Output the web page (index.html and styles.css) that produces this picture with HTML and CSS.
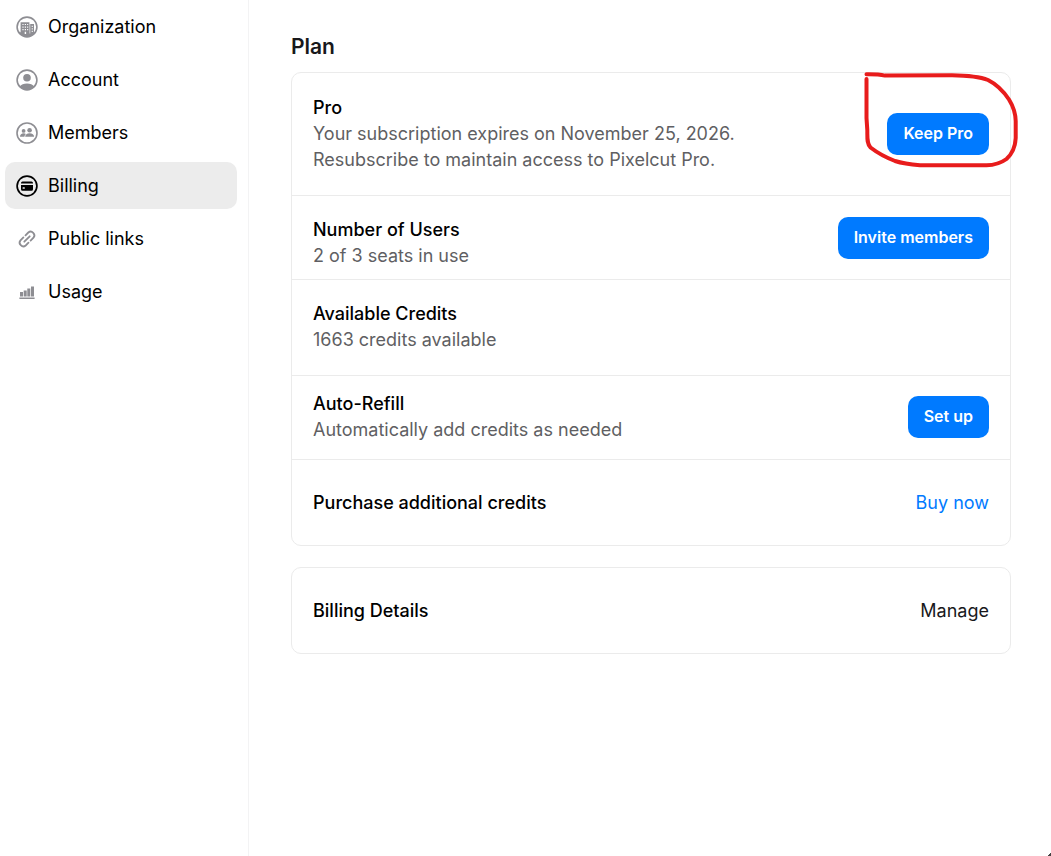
FILE: index.html
```html
<!DOCTYPE html>
<html lang="en">
<head>
    <meta charset="UTF-8">
    <meta name="viewport" content="width=device-width, initial-scale=1">
    <title>Billing</title>
    <link rel="stylesheet" href="styles.css">
</head>
<body>
<div class="page">
    <nav class="sidebar">
        <a class="nav-item" href="#organization">
            <svg class="icon" viewBox="0 0 22 22">
                <circle cx="11" cy="11" r="9.9" fill="none" stroke="currentColor" stroke-width="1.6"/>
                <path fill="currentColor" d="M4.6 6.2h8.8v1.7h4.6v8.3h1.3a9.9 9.9 0 0 1-16.6 0h1.9z"/>
                <path fill="#fff" d="M6.4 7.900h1.200v1.200H6.400zM8.800 7.900H10v1.200H8.800zM11.100 7.900h1.100v1.200h-1.100zM6.400 10.500h1.200v1.200H6.400zM8.800 10.500H10v1.200H8.800zM11.100 10.500h1.100v1.200h-1.100zM6.400 13.100h1.200v1.200H6.400zM8.800 13.100H10v1.200H8.800zM11.100 13.100h1.100v1.200h-1.100zM8.700 15.700h1.400v2.200H8.700zM13.600 8h.6v9.400h-.6zM15.700 9.800h1.100v1.100h-1.100zM15.700 12.300h1.100v1.100h-1.100zM15.700 14.800h1.100v1.100h-1.100z"/>
            </svg>
            <span>Organization</span>
        </a>
        <a class="nav-item" href="#account">
            <svg class="icon" viewBox="0 0 22 22">
                <circle cx="11" cy="11" r="9.9" fill="none" stroke="currentColor" stroke-width="1.6"/>
                <circle cx="11" cy="8.7" r="3.8" fill="currentColor"/>
                <path fill="currentColor" d="M3.6 17.6c1.6-2 4.2-3.2 7.4-3.2s5.8 1.2 7.4 3.2a10 10 0 0 1-14.8 0z"/>
            </svg>
            <span>Account</span>
        </a>
        <a class="nav-item" href="#members">
            <svg class="icon" viewBox="0 0 22 22">
                <circle cx="11" cy="11" r="10" fill="none" stroke="currentColor" stroke-width="1.6"/>
                <circle cx="7.6" cy="8.9" r="1.9" fill="currentColor"/>
                <circle cx="13.6" cy="8.3" r="2.3" fill="currentColor"/>
                <path fill="currentColor" d="M4 14.8c0-2.200 1.500-3.500 3.600-3.500 1 0 1.800.3 2.300.8-.9.7-1.400 1.600-1.500 2.700zM9.200 14.8c0-2.300 1.800-3.600 4.400-3.600s4.500 1.300 4.500 3.600z"/>
            </svg>
            <span>Members</span>
        </a>
        <a class="nav-item active" href="#billing">
            <svg class="icon" viewBox="0 0 22 22">
                <circle cx="11" cy="11" r="9.9" fill="none" stroke="currentColor" stroke-width="1.7"/>
                <path fill="currentColor" d="M6.500 6.500h9a1.500 1.500 0 0 1 1.500 1.500v.4H5V8a1.500 1.500 0 0 1 1.500-1.500zM5 9.900h12v4.400a1.500 1.500 0 0 1-1.500 1.500h-9A1.500 1.500 0 0 1 5 14.300z"/>
                <rect x="6.600" y="12.200" width="2.200" height="1.600" rx=".4" fill="#ececec"/>
            </svg>
            <span>Billing</span>
        </a>
        <a class="nav-item" href="#links">
            <svg class="icon" viewBox="0 0 22 22" fill="none" stroke="currentColor" stroke-width="1.8" stroke-linecap="round">
                <path d="M8.300 13.700l5.400-5.400"/>
                <path d="M9.500 7.300l2.800-2.800a3.700 3.700 0 0 1 5.200 5.200l-2.900 2.900"/>
                <path d="M12.500 14.700l-2.800 2.800a3.700 3.700 0 0 1-5.200-5.200l2.900-2.900"/>
            </svg>
            <span>Public links</span>
        </a>
        <a class="nav-item" href="#usage">
            <svg class="icon" viewBox="0 0 22 22" fill="currentColor">
                <path d="M4 11h3v4.500H4zM7.700 9.500h3v6h-3zM11.300 7.500h3v8h-3zM15 5.500h3v10h-3zM3.400 16.500h15.200V18H3.400z"/>
            </svg>
            <span>Usage</span>
        </a>
    </nav>

    <main class="content">
        <h1 class="heading">Plan</h1>

        <section class="card">
            <div class="row row-pro">
                <div class="info">
                    <h2 class="title">Pro</h2>
                    <p class="desc">Your subscription expires on November 25, 2026.<br>Resubscribe to maintain access to Pixelcut Pro.</p>
                </div>
                <div class="marked">
                    <button class="btn" type="button">Keep Pro</button>
                    <!-- hand-drawn circle around the button -->
                    <svg class="scribble" viewBox="863 70 156 99">
                        <path d="M866.500 74.300C874 74.200 879 74.300 885 75.600L952 75.300C966 75.500 979 76.500 988 80C997 84.500 1004 92 1009 99.500C1013 106 1015.500 113 1015.700 121V138C1015.300 146 1012 154 1006.500 159C1001 163 994 165.200 986.500 165.300H920C911 164.500 903 163.500 895 161C886 157.500 877 152.500 870.500 147.500C866.500 143 867.500 137 867.300 130L866.500 118V79"/>
                    </svg>
                </div>
            </div>
            <div class="row row-users">
                <div class="info">
                    <h2 class="title">Number of Users</h2>
                    <p class="desc">2 of 3 seats in use</p>
                </div>
                <button class="btn" type="button">Invite members</button>
            </div>
            <div class="row">
                <div class="info">
                    <h2 class="title">Available Credits</h2>
                    <p class="desc">1663 credits available</p>
                </div>
            </div>
            <div class="row row-refill">
                <div class="info">
                    <h2 class="title">Auto-Refill</h2>
                    <p class="desc">Automatically add credits as needed</p>
                </div>
                <button class="btn" type="button">Set up</button>
            </div>
            <div class="row row-single">
                <h2 class="title">Purchase additional credits</h2>
                <a class="link" href="#buy">Buy now</a>
            </div>
        </section>

        <section class="card">
            <div class="row row-single">
                <h2 class="title">Billing Details</h2>
                <a class="link link-dark" href="#manage">Manage</a>
            </div>
        </section>
    </main>
</div>
<div class="corner"></div>
</body>
</html>
```
FILE: styles.css
```css
* {
    margin: 0;
    padding: 0;
    box-sizing: border-box;
}

body {
    font-family: Inter, "Liberation Sans", sans-serif;
    font-size: 18px;
    line-height: 26px;
    color: #000;
    background: #fff;
}

a {
    color: inherit;
    text-decoration: none;
}

.page {
    display: flex;
    min-height: 100vh;
}

/* sidebar */
.sidebar {
    display: flex;
    flex-direction: column;
    gap: 6px;
    flex: none;
    width: 249px;
    padding: 3px 11px 3px 5px;
    border-right: 1px solid #f3f3f4;
}

.nav-item {
    display: flex;
    align-items: center;
    gap: 10px;
    height: 47px;
    padding: 0 11px;
    border-radius: 10px;
}

.nav-item.active {
    background: #ececec;
}

.icon {
    flex: none;
    width: 22px;
    height: 22px;
    color: #8e8e93;
}

.active .icon {
    color: #000;
}

/* content */
.content {
    flex: 1;
    padding: 34px 40px 34px 42px;
}

.heading {
    margin-bottom: 12px;
    font-size: 21px;
    font-weight: 600;
    color: #18181b;
}

.card {
    margin-bottom: 21px;
    border: 1px solid #ebebeb;
    border-radius: 10px;
}

.row {
    display: flex;
    align-items: center;
    justify-content: space-between;
    padding: 21px 21px 22px;
}

.row + .row {
    border-top: 1px solid #ebebeb;
}

.row-pro {
    padding-top: 22px;
}

.row-users {
    align-items: flex-start;
    padding-bottom: 10px;
}

.row-refill {
    padding-top: 15px;
    padding-bottom: 16px;
}

.row-single {
    padding-top: 30px;
    padding-bottom: 29px;
}

.title {
    font-size: 18px;
    font-weight: 500;
}

.desc {
    color: #5f5f63;
}

.btn {
    height: 42px;
    padding: 0 16px 2px;
    border: 0;
    border-radius: 10px;
    background: #007aff;
    color: #fff;
    font-family: inherit;
    font-size: 16px;
    font-weight: 600;
    cursor: pointer;
}

.link {
    color: #007aff;
}

.link-dark {
    color: #18181b;
}

.marked {
    position: relative;
}

.scribble {
    position: absolute;
    top: -43px;
    right: -30px;
    width: 156px;
    height: 99px;
    fill: none;
    stroke: #e81c1c;
    stroke-width: 4;
    stroke-linecap: round;
    stroke-linejoin: round;
    pointer-events: none;
}

/* dark window corner */
.corner {
    position: fixed;
    right: 0;
    bottom: 0;
    width: 4px;
    height: 4px;
    background: linear-gradient(135deg, transparent 50%, #444 50%);
}
```
